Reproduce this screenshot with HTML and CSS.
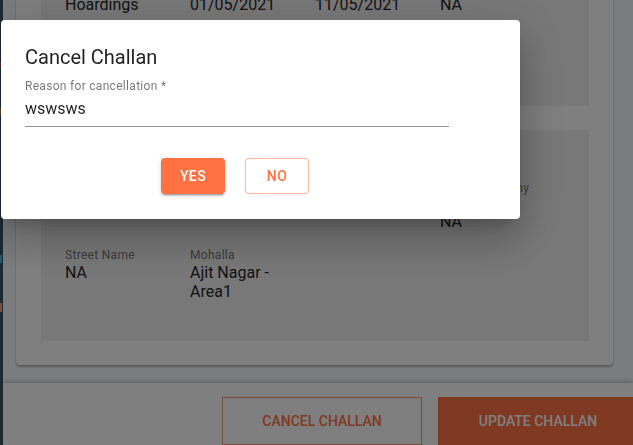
FILE: index.html
```html
<!DOCTYPE html>
<html lang="en">
<head>
<meta charset="utf-8">
<title>Update Challan</title>
<link rel="stylesheet" href="styles.css">
</head>
<body>
<div class="app">
  <aside class="sidebar">
    <i class="mark mark-red"></i>
    <i class="mark mark-orange"></i>
    <i class="mark mark-blue"></i>
    <i class="mark mark-peach"></i>
  </aside>
  <div class="main">
    <div class="content">
      <section class="card">
        <div class="panel panel-top">
          <div class="fields">
            <div class="field"><span class="label">Type</span><span class="value">Hoardings</span></div>
            <div class="field"><span class="label">From Date</span><span class="value">01/05/2021</span></div>
            <div class="field"><span class="label">To Date</span><span class="value">11/05/2021</span></div>
            <div class="field"><span class="label">Remarks</span><span class="value">NA</span></div>
          </div>
        </div>
        <div class="panel panel-loc">
          <div class="fields">
            <div class="field field-last"><span class="label">Agent Company Name</span><span class="value">NA</span></div>
            <div class="field field-first"><span class="label">Street Name</span><span class="value">NA</span></div>
            <div class="field"><span class="label">Mohalla</span><span class="value">Ajit Nagar - Area1</span></div>
          </div>
        </div>
      </section>
    </div>
    <footer class="footer">
      <button class="btn-lg btn-lg-outline" type="button">Cancel Challan</button>
      <button class="btn-lg btn-lg-filled" type="button">Update Challan</button>
    </footer>
  </div>
</div>

<div class="backdrop"></div>

<div class="dialog" role="dialog" aria-labelledby="dlg-title">
  <h2 class="dialog-title" id="dlg-title">Cancel Challan</h2>
  <label class="input-label" for="reason">Reason for cancellation *</label>
  <input class="input" id="reason" type="text" value="wswsws">
  <div class="actions">
    <button class="btn btn-yes" type="button">Yes</button>
    <button class="btn btn-no" type="button">No</button>
  </div>
</div>
</body>
</html>
```

FILE: styles.css
```css
* { box-sizing: border-box; }

html, body {
  margin: 0;
  height: 100%;
  overflow: hidden;
  font-family: Roboto, "Liberation Sans", Arial, sans-serif;
}

.app {
  display: flex;
  height: 445px;
  background: #f6f8fc;
}

.sidebar {
  width: 3px;
  flex: none;
  background: #385469;
  display: flex;
  flex-direction: column;
}

.mark {
  display: block;
  width: 2px;
}
.mark-red { height: 5px; margin-top: 62px; background: #c0506a; }
.mark-orange { height: 7px; margin-top: 41px; background: #e08a4a; }
.mark-blue { height: 8px; margin-top: 140px; background: #4ab0d8; }
.mark-peach { height: 9px; margin-top: 40px; background: #f0a080; }

.main {
  flex: 1;
  display: flex;
  flex-direction: column;
  min-width: 0;
}

.content {
  flex: 1;
  overflow: hidden;
  display: flex;
  flex-direction: column;
  justify-content: flex-end;
  padding: 0 20px 18px 13px;
}

.card {
  flex: none;
  background: #fff;
  border-radius: 4px;
  box-shadow: 0 2px 2px rgba(0,0,0,0.25), 0 0 2px rgba(0,0,0,0.1);
  padding: 24px 24px 24px 25px;
  display: flex;
  flex-direction: column;
  gap: 24px;
}

.panel {
  background: #f0f0f0;
  padding: 24px;
}
.panel-top { padding-bottom: 92px; }
.panel-loc { padding: 50px 24px 40px; }

.fields {
  display: grid;
  grid-template-columns: repeat(4, 1fr);
  row-gap: 16px;
  align-items: start;
}

.field {
  display: flex;
  flex-direction: column;
  padding-right: 8px;
}
.field-last { grid-column: 4; }
.field-first { grid-column: 1; }

.label {
  font-size: 12px;
  line-height: 16px;
  letter-spacing: 0.3px;
  color: #767676;
}

.value {
  font-size: 16px;
  line-height: 19px;
  color: #262626;
}

.footer {
  flex: none;
  height: 62px;
  background: #fff;
  box-shadow: 0 -2px 4px rgba(0,0,0,0.18);
  display: flex;
  gap: 16px;
  padding: 14px 0 0 219px;
  overflow: hidden;
  position: relative;
}

.btn-lg {
  flex: none;
  width: 200px;
  height: 48px;
  font-family: Roboto, "Liberation Sans", Arial, sans-serif;
  font-size: 14px;
  font-weight: 500;
  letter-spacing: 0;
  text-transform: uppercase;
  border-radius: 0;
  cursor: pointer;
}
.btn-lg-outline {
  background: transparent;
  border: 1px solid rgba(255,112,67,0.75);
  color: #ff7043;
}
.btn-lg-filled {
  background: #ff7043;
  border: none;
  color: #fff;
}

.backdrop {
  position: fixed;
  inset: 0;
  background: rgba(0,0,0,0.5);
}

.dialog {
  position: fixed;
  left: 1px;
  top: 20px;
  width: 519px;
  height: 199px;
  background: #fff;
  border-radius: 4px;
  padding: 21px 24px 24px;
  box-shadow: 0 11px 15px -7px rgba(0,0,0,0.2), 0 24px 38px 3px rgba(0,0,0,0.14), 0 9px 46px 8px rgba(0,0,0,0.12);
}

.dialog-title {
  margin: 0;
  font-size: 20px;
  font-weight: 400;
  line-height: 32px;
  color: rgba(0,0,0,0.87);
}

.input-label {
  display: block;
  margin-top: 5px;
  font-size: 12px;
  line-height: 16px;
  letter-spacing: 0.3px;
  color: rgba(0,0,0,0.54);
}

.input {
  display: block;
  width: 424px;
  margin: 1px 0 0;
  padding: 4px 0 8px;
  height: 32px;
  border: none;
  border-bottom: 1px solid rgba(0,0,0,0.42);
  outline: none;
  background: transparent;
  font-family: Roboto, "Liberation Sans", Arial, sans-serif;
  font-size: 16px;
  line-height: 19px;
  color: rgba(0,0,0,0.87);
}

.actions {
  width: 420px;
  margin-top: 31px;
  display: flex;
  justify-content: center;
  gap: 20px;
}

.btn {
  width: 64px;
  height: 36px;
  border-radius: 4px;
  font-family: Roboto, "Liberation Sans", Arial, sans-serif;
  font-size: 14px;
  font-weight: 500;
  letter-spacing: 0.4px;
  text-transform: uppercase;
  cursor: pointer;
}
.btn-yes {
  background: #ff7043;
  color: #fff;
  border: none;
  box-shadow: 0 3px 1px -2px rgba(0,0,0,0.2), 0 2px 2px 0 rgba(0,0,0,0.14), 0 1px 5px 0 rgba(0,0,0,0.12);
}
.btn-no {
  background: #fff;
  color: #ff7043;
  border: 1px solid rgba(255,112,67,0.5);
}
```
